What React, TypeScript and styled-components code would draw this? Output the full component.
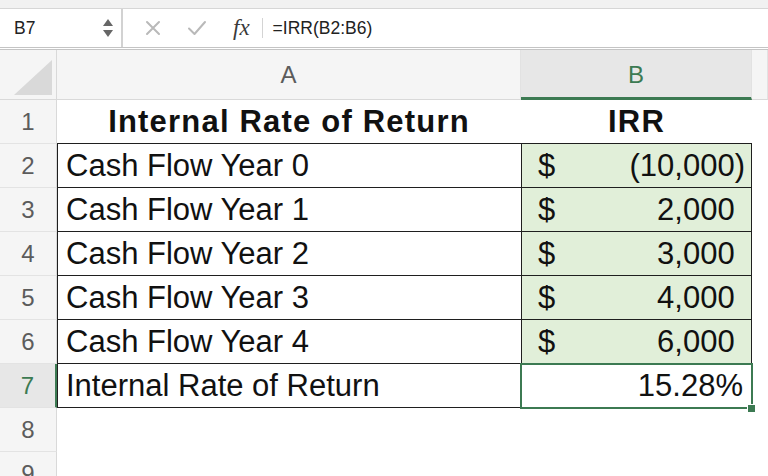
import React from 'react';
import styled, { createGlobalStyle } from 'styled-components';

const Colors = {
  chrome: '#f1f1f1',
  chromeLine: '#d6d6d6',
  headerBg: '#f5f5f5',
  headerActive: '#e7e7e7',
  headerLine: '#d9d9d9',
  text: '#111',
  muted: '#5c5c5c',
  faint: '#b9b9b9',
  green: '#3c7a52',
  fill: '#e1efd9',
  border: '#1f1f1f',
};

const GlobalStyle = createGlobalStyle`
  html, body {
    margin: 0;
    padding: 0;
    background: #fff;
    overflow: hidden;
  }
  body {
    font-family: 'Liberation Sans', Arial, sans-serif;
    color: ${Colors.text};
  }
`;

const Page = styled.div`
  width: 768px;
  height: 476px;
  overflow: hidden;
  display: flex;
  flex-direction: column;
  & > * {
    flex-shrink: 0;
  }
`;

const TopStrip = styled.div`
  height: 8px;
  background: ${Colors.chrome};
  border-bottom: 1px solid ${Colors.chromeLine};
`;

const FormulaBar = styled.div`
  height: 38px;
  display: flex;
  align-items: center;
  background: #fff;
  border-bottom: 3px double #c4c4c4;
`;

const NameBox = styled.div`
  width: 123px;
  height: 100%;
  box-sizing: border-box;
  display: flex;
  align-items: center;
  justify-content: space-between;
  padding: 0 8px 0 14px;
  border-right: 2px solid #d2d2d2;
  font-size: 17.5px;
  color: #222;
`;

const Stepper = styled.div`
  display: flex;
  flex-direction: column;
  gap: 4px;
`;

const Arrow = styled.span<{ $down?: boolean }>`
  width: 0;
  height: 0;
  border-left: 5px solid transparent;
  border-right: 5px solid transparent;
  ${(p) => (p.$down ? 'border-top: 7px solid #666;' : 'border-bottom: 7px solid #666;')}
`;

const Controls = styled.div`
  display: flex;
  align-items: center;
  height: 100%;
  padding-left: 22px;
  gap: 26px;
`;

const Fx = styled.span`
  font-family: 'Liberation Serif', 'Times New Roman', serif;
  font-style: italic;
  font-size: 23px;
  color: #3a3a3a;
  padding-right: 12px;
  border-right: 1px solid #d4d4d4;
  line-height: 20px;
`;

const FormulaText = styled.span`
  margin-left: 10px;
  font-size: 17.5px;
  color: #222;
`;

const Grid = styled.div`
  display: grid;
  grid-template-columns: 57px 464px 231px 1fr;
  grid-template-rows: 50px;
  grid-auto-rows: 44px;
`;

const Corner = styled.div`
  background: ${Colors.headerBg};
  border-right: 1px solid ${Colors.headerLine};
  border-bottom: 1px solid ${Colors.headerLine};
  display: flex;
  align-items: flex-end;
  justify-content: flex-end;
  padding: 0 4px 4px 0;
`;

const ColHeader = styled.div<{ $active?: boolean }>`
  background: ${(p) => (p.$active ? Colors.headerActive : Colors.headerBg)};
  border-bottom: ${(p) => (p.$active ? `3px solid ${Colors.green}` : `1px solid ${Colors.headerLine}`)};
  border-right: 1px solid #e2e2e2;
  display: flex;
  align-items: center;
  justify-content: center;
  font-size: 24px;
  color: ${(p) => (p.$active ? Colors.green : Colors.muted)};
  padding-top: ${(p) => (p.$active ? '2px' : '0')};
`;

const RowHeader = styled.div<{ $active?: boolean }>`
  background: ${(p) => (p.$active ? Colors.headerActive : Colors.headerBg)};
  border-bottom: 1px solid #e3e3e3;
  border-right: ${(p) => (p.$active ? `2px solid ${Colors.green}` : `1px solid ${Colors.headerLine}`)};
  display: flex;
  align-items: center;
  justify-content: center;
  font-size: 24px;
  color: ${(p) => (p.$active ? Colors.green : Colors.muted)};
`;

type Edges = { $left?: boolean; $right?: boolean; $bottom?: boolean };

const Cell = styled.div<Edges & { $fill?: boolean; $bold?: boolean; $center?: boolean }>`
  position: relative;
  box-sizing: border-box;
  display: flex;
  align-items: center;
  justify-content: ${(p) => (p.$center ? 'center' : 'flex-start')};
  padding: 0 8px;
  font-size: 31px;
  font-weight: ${(p) => (p.$bold ? 700 : 400)};
  letter-spacing: ${(p) => (p.$bold ? '1.2px' : '0')};
  white-space: nowrap;
  background: ${(p) => (p.$fill ? Colors.fill : '#fff')};
  border-left: ${(p) => (p.$left ? `1px solid ${Colors.border}` : 'none')};
  border-right: ${(p) => (p.$right ? `1px solid ${Colors.border}` : 'none')};
  border-bottom: ${(p) => (p.$bottom ? `1px solid ${Colors.border}` : 'none')};
`;

const MoneyCell = styled(Cell)`
  justify-content: space-between;
  padding: 0 6px 0 16px;
`;

const Paren = styled.span<{ $hidden?: boolean }>`
  visibility: ${(p) => (p.$hidden ? 'hidden' : 'visible')};
`;

const SelectedCell = styled(Cell)`
  justify-content: flex-end;
  padding-right: 9px;
  &::after {
    content: '';
    position: absolute;
    inset: -1px;
    border: 2px solid ${Colors.green};
    pointer-events: none;
  }
`;

const FillHandle = styled.span`
  position: absolute;
  right: -4px;
  bottom: -5px;
  width: 7px;
  height: 7px;
  background: ${Colors.green};
  border: 1px solid #fff;
  z-index: 2;
`;

const Blank = styled.div``;

const flows = [
  { label: 'Cash Flow Year 0', amount: '10,000', negative: true },
  { label: 'Cash Flow Year 1', amount: '2,000' },
  { label: 'Cash Flow Year 2', amount: '3,000' },
  { label: 'Cash Flow Year 3', amount: '4,000' },
  { label: 'Cash Flow Year 4', amount: '6,000' },
];

const CloseIcon = () => (
  <svg width="16" height="16" viewBox="0 0 16 16">
    <path d="M2 2 L14 14 M14 2 L2 14" stroke={Colors.faint} strokeWidth="2" strokeLinecap="round" />
  </svg>
);

const CheckIcon = () => (
  <svg width="20" height="16" viewBox="0 0 20 16">
    <path d="M2 8.5 L7.5 14 L18 2" stroke={Colors.faint} strokeWidth="2" fill="none" strokeLinecap="round" strokeLinejoin="round" />
  </svg>
);

const CornerTriangle = () => (
  <svg width="38" height="35" viewBox="0 0 38 35">
    <polygon points="0,35 38,0 38,35" fill="#d9d9d9" />
  </svg>
);

export default function App() {
  return (
    <Page>
      <GlobalStyle />
      <TopStrip />
      <FormulaBar>
        <NameBox>
          B7
          <Stepper>
            <Arrow />
            <Arrow $down />
          </Stepper>
        </NameBox>
        <Controls>
          <CloseIcon />
          <CheckIcon />
          <Fx>fx</Fx>
        </Controls>
        <FormulaText>=IRR(B2:B6)</FormulaText>
      </FormulaBar>

      <Grid>
        <Corner>
          <CornerTriangle />
        </Corner>
        <ColHeader>A</ColHeader>
        <ColHeader $active>B</ColHeader>
        <ColHeader />

        <RowHeader>1</RowHeader>
        <Cell $bold $center $bottom>
          Internal Rate of Return
        </Cell>
        <Cell $bold $center $bottom>
          IRR
        </Cell>
        <Blank />

        {flows.map((f, i) => (
          <React.Fragment key={f.label}>
            <RowHeader>{i + 2}</RowHeader>
            <Cell $left $bottom>
              {f.label}
            </Cell>
            <MoneyCell $fill $left $right $bottom>
              <span>$</span>
              <span>
                {f.negative ? '(' : ''}
                {f.amount}
                <Paren $hidden={!f.negative}>)</Paren>
              </span>
            </MoneyCell>
            <Blank />
          </React.Fragment>
        ))}

        <RowHeader $active>7</RowHeader>
        <Cell $left $bottom>
          Internal Rate of Return
        </Cell>
        <SelectedCell>
          15.28%
          <FillHandle />
        </SelectedCell>
        <Blank />

        <RowHeader>8</RowHeader>
        <Blank />
        <Blank />
        <Blank />
        <RowHeader>9</RowHeader>
        <Blank />
        <Blank />
        <Blank />
      </Grid>
    </Page>
  );
}
